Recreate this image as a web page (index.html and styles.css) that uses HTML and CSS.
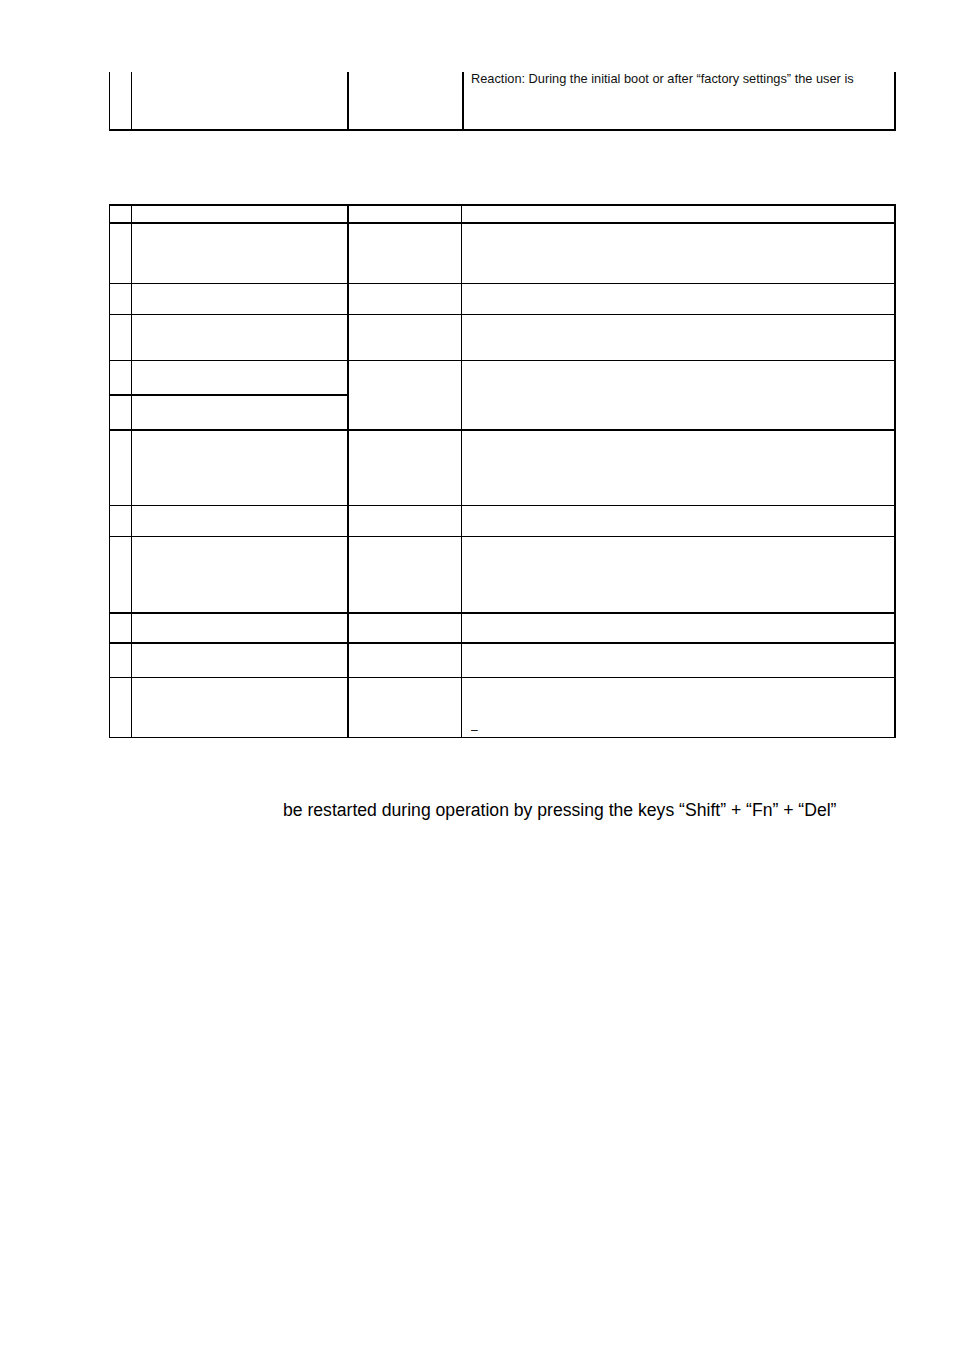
FILE: index.html
```html
<!DOCTYPE html>
<html lang="en">
<head>
<meta charset="utf-8">
<title>Document page</title>
<link rel="stylesheet" href="styles.css">
</head>
<body>
<div class="page">
  <div class="tbl tbl-top">
    <div class="cell c1"></div>
    <div class="cell c2"></div>
    <div class="cell c3"></div>
    <div class="cell c4 text">Reaction: During the initial boot or after “factory settings” the user is</div>
  </div>

  <div class="tbl tbl-main">
    <!-- header -->
    <div class="cell c1 thick"></div><div class="cell c2 thick"></div><div class="cell c3 thick"></div><div class="cell c4 thick"></div>
    <!-- row 1 -->
    <div class="cell c1"></div><div class="cell c2"></div><div class="cell c3"></div><div class="cell c4"></div>
    <!-- row 2 -->
    <div class="cell c1"></div><div class="cell c2"></div><div class="cell c3"></div><div class="cell c4"></div>
    <!-- row 3 -->
    <div class="cell c1"></div><div class="cell c2"></div><div class="cell c3"></div><div class="cell c4"></div>
    <!-- row 4 (cols 3-4 span two rows) -->
    <div class="cell c1 thick"></div><div class="cell c2 thick"></div><div class="cell c3 thick span2"></div><div class="cell c4 thick span2"></div>
    <!-- row 5 -->
    <div class="cell c1 thick"></div><div class="cell c2 thick"></div>
    <!-- row 6 -->
    <div class="cell c1"></div><div class="cell c2"></div><div class="cell c3"></div><div class="cell c4"></div>
    <!-- row 7 -->
    <div class="cell c1"></div><div class="cell c2"></div><div class="cell c3"></div><div class="cell c4"></div>
    <!-- row 8 -->
    <div class="cell c1 thick"></div><div class="cell c2 thick"></div><div class="cell c3 thick"></div><div class="cell c4 thick"></div>
    <!-- row 9 -->
    <div class="cell c1 thick"></div><div class="cell c2 thick"></div><div class="cell c3 thick"></div><div class="cell c4 thick"></div>
    <!-- row 10 -->
    <div class="cell c1"></div><div class="cell c2"></div><div class="cell c3"></div><div class="cell c4"></div>
    <!-- row 11 -->
    <div class="cell c1"></div><div class="cell c2"></div><div class="cell c3"></div><div class="cell c4 tail"><span class="dash">–</span></div>
  </div>

  <p class="note">be restarted during operation by pressing the keys “Shift” + “Fn” + “Del”</p>
</div>
</body>
</html>
```

FILE: styles.css
```css
html, body {
  margin: 0;
  padding: 0;
  background: #ffffff;
}

body {
  font-family: "Liberation Sans", Arial, sans-serif;
  color: #000000;
}

.page {
  padding: 72px 0 0 109px;
  width: 954px;
  box-sizing: border-box;
}

.tbl {
  display: grid;
  width: 787px;
  box-sizing: border-box;
  border-left: 1px solid #000;
}

.cell {
  box-sizing: border-box;
  border-bottom: 1px solid #000;
  border-right: 1px solid #000;
}

.cell.thick {
  border-bottom-width: 2px;
}

.c2,
.c4 {
  border-right-width: 2px;
}

/* top (continued) table */
.tbl-top {
  grid-template-columns: 22px 217px 115px 432px;
  grid-template-rows: 59px;
}

.tbl-top .cell {
  border-bottom-width: 2px;
}

.tbl-top .c3 {
  border-right-width: 2px;
}

.text {
  font-size: 12.8px;
  line-height: 14px;
  padding: 0 0 0 7px;
  color: #111;
}

/* main table */
.tbl-main {
  margin-top: 73px;
  border-top: 2px solid #000;
  grid-template-columns: 22px 217px 113px 434px;
  grid-template-rows: 18px 60px 31px 46px 35px 35px 75px 31px 77px 30px 34px 60px;
}

.span2 {
  grid-row: span 2;
}

.tail {
  display: flex;
  align-items: flex-end;
  padding: 0 0 0 9px;
}

.dash {
  font-size: 12px;
  line-height: 14px;
}

.note {
  margin: 62px 0 0 174px;
  font-size: 17.6px;
  line-height: 20px;
}
```
